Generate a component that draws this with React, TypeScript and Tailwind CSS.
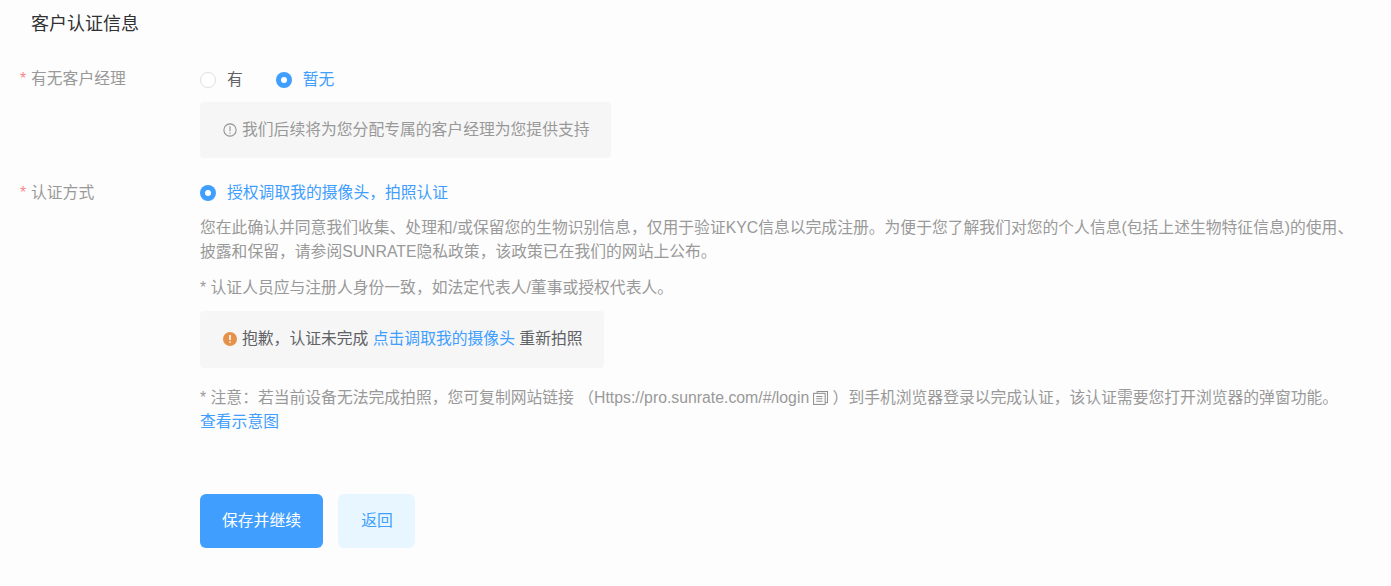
function Radio({ checked, label }: { checked: boolean; label: string }) {
  return (
    <div className="flex items-center">
      {checked ? (
        <span className="flex h-4 w-4 items-center justify-center rounded-full bg-[#409eff]">
          <span className="h-[6px] w-[6px] rounded-full bg-white" />
        </span>
      ) : (
        <span className="h-4 w-4 rounded-full border border-[#dcdfe6] bg-white" />
      )}
      <span className={checked ? 'ml-[11px] text-[#409eff]' : 'ml-[11px] text-[#606266]'}>{label}</span>
    </div>
  );
}

function Required({ children }: { children: string }) {
  return (
    <div className="w-[200px] shrink-0 pl-[20px] text-[#999]">
      <span className="inline-block w-[11px] text-[#f78989]">*</span>
      {children}
    </div>
  );
}

export default function App() {
  return (
    <div
      className="h-[586px] overflow-hidden bg-[#fdfdfd] text-[15.8px] leading-[24px]"
      style={{ fontFamily: '"Liberation Sans", "Noto Sans CJK SC", sans-serif' }}
    >
      <h2 className="pl-[31px] pt-[12px] text-[18px] font-normal leading-[24px] text-[#303133]">客户认证信息</h2>

      <div className="mt-[32px] flex">
        <div className="-mt-[1px]">
          <Required>有无客户经理</Required>
        </div>
        <div className="flex-1">
          <div className="flex gap-[33px]">
            <Radio checked={false} label="有" />
            <Radio checked label="暂无" />
          </div>
          <div className="mt-[10px] flex h-[56px] w-[411px] items-center rounded bg-[#f6f6f6] pl-[23px] text-[#999]">
            <svg viewBox="0 0 16 16" className="mr-[5px] h-[14px] w-[14px]" fill="none" stroke="#8f8f8f" strokeWidth="1.2">
              <circle cx="8" cy="8" r="7" />
              <path d="M8 3.8v5.6M8 10.8v1.4" />
            </svg>
            我们后续将为您分配专属的客户经理为您提供支持
          </div>
        </div>
      </div>

      <div className="mt-[23px] flex">
        <Required>认证方式</Required>
        <div className="flex-1 pr-[25px]">
          <Radio checked label="授权调取我的摄像头，拍照认证" />
          <p className="mt-[11px] text-[#999]">
            您在此确认并同意我们收集、处理和/或保留您的生物识别信息，仅用于验证KYC信息以完成注册。为便于您了解我们对您的个人信息(包括上述生物特征信息)的使用、披露和保留，请参阅SUNRATE隐私政策，该政策已在我们的网站上公布。
          </p>
          <p className="mt-[12px] text-[#999]">* 认证人员应与注册人身份一致，如法定代表人/董事或授权代表人。</p>
          <div className="mt-[11px] flex h-[57px] w-[404px] items-center rounded bg-[#f6f6f6] pb-[2px] pl-[23px] text-[#606266]">
            <svg viewBox="0 0 16 16" className="mr-[5px] h-[14px] w-[14px]">
              <circle cx="8" cy="8" r="8" fill="#e6914a" />
              <path d="M8 3.5v5.5M8 10.8v1.6" stroke="#fff" strokeWidth="1.8" />
            </svg>
            抱歉，认证未完成&nbsp;<span className="text-[#409eff]">点击调取我的摄像头</span>&nbsp;重新拍照
          </div>
          <p className="mt-[18px] text-[#999]">
            * 注意：若当前设备无法完成拍照，您可复制网站链接 （<span>Https://pro.sunrate.com/#/login</span>
            <svg
              viewBox="0 0 16 15"
              className="ml-[4px] inline-block h-[14px] w-[15px] align-[-2px]"
              fill="none"
              stroke="#8f8f8f"
              strokeWidth="1.1"
            >
              <path d="M4.5 2.5V.6h11v11.8h-2.5" />
              <rect x=".6" y="2.5" width="12.4" height="11.9" />
              <path d="M3.5 5.8h6.6M3.5 8.4h6.6M3.5 11h6.6" />
            </svg>{' '}
            ）到手机浏览器登录以完成认证，该认证需要您打开浏览器的弹窗功能。
            <br />
            <span className="text-[#409eff]">查看示意图</span>
          </p>
        </div>
      </div>

      <div className="mt-[60px] flex gap-[15px] pl-[200px]">
        <button className="h-[54px] w-[123px] rounded-md bg-[#409eff] text-white">保存并继续</button>
        <button className="h-[54px] w-[77px] rounded-md bg-[#e8f7ff] pl-[1px] text-[#409eff]">返回</button>
      </div>
    </div>
  );
}
